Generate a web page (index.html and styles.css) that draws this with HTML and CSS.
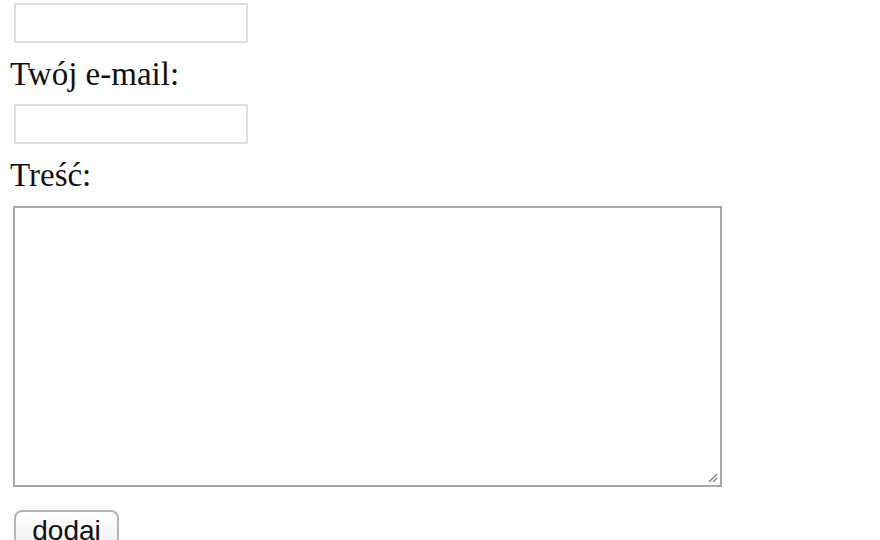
FILE: index.html
```html
<!DOCTYPE html>
<html lang="pl">
<head>
<meta charset="UTF-8">
<title>Dodaj komentarz</title>
<link rel="stylesheet" href="styles.css">
</head>
<body>
<form class="comment-form" action="#" method="post">
	<input class="field" type="text" name="nick">
	<label class="label" for="email">Twój e-mail:</label>
	<input class="field" type="text" id="email" name="email">
	<label class="label" for="tresc">Treść:</label>
	<div class="area-wrap">
		<textarea class="area" id="tresc" name="tresc"></textarea>
		<svg class="grip" width="12" height="12" viewBox="0 0 12 12">
			<path d="M11 3 L3 11 M11 7 L7 11" stroke="#8a8a8a" stroke-width="1.6" fill="none"/>
		</svg>
	</div>
	<button class="submit" type="submit">dodaj</button>
</form>
</body>
</html>
```

FILE: styles.css
```css
body{
	margin: 0;
	padding: 3px 0 0 10px;
	background: #fff;
	font-family: "Liberation Serif", "Times New Roman", serif;
	color: #111;
}
.comment-form{
	display: flex;
	flex-direction: column;
	align-items: flex-start;
}
.label{
	display: block;
	font-size: 33px;
	line-height: 37px;
	margin: 13px 0 11px 0;
}
.field{
	box-sizing: border-box;
	width: 234px;
	height: 40px;
	margin: 0 0 0 4px;
	border: 2px solid #dedede;
	outline: 0;
}
.area-wrap{
	position: relative;
	margin-top: 1px;
	margin-left: 3px;
}
.area{
	display: block;
	box-sizing: border-box;
	width: 709px;
	height: 281px;
	border: 2px solid #a8a8a8;
	resize: none;
	outline: 0;
}
.grip{
	position: absolute;
	right: 4px;
	bottom: 4px;
}
.submit{
	margin: 23px 0 0 4px;
	width: 105px;
	height: 44px;
	padding: 0 0 2px 0;
	border: 2px solid #b4b4b4;
	border-radius: 8px;
	background: linear-gradient(#ffffff, #ececec);
	font-family: "Liberation Sans", Arial, sans-serif;
	font-size: 28px;
	color: #111;
}
```
